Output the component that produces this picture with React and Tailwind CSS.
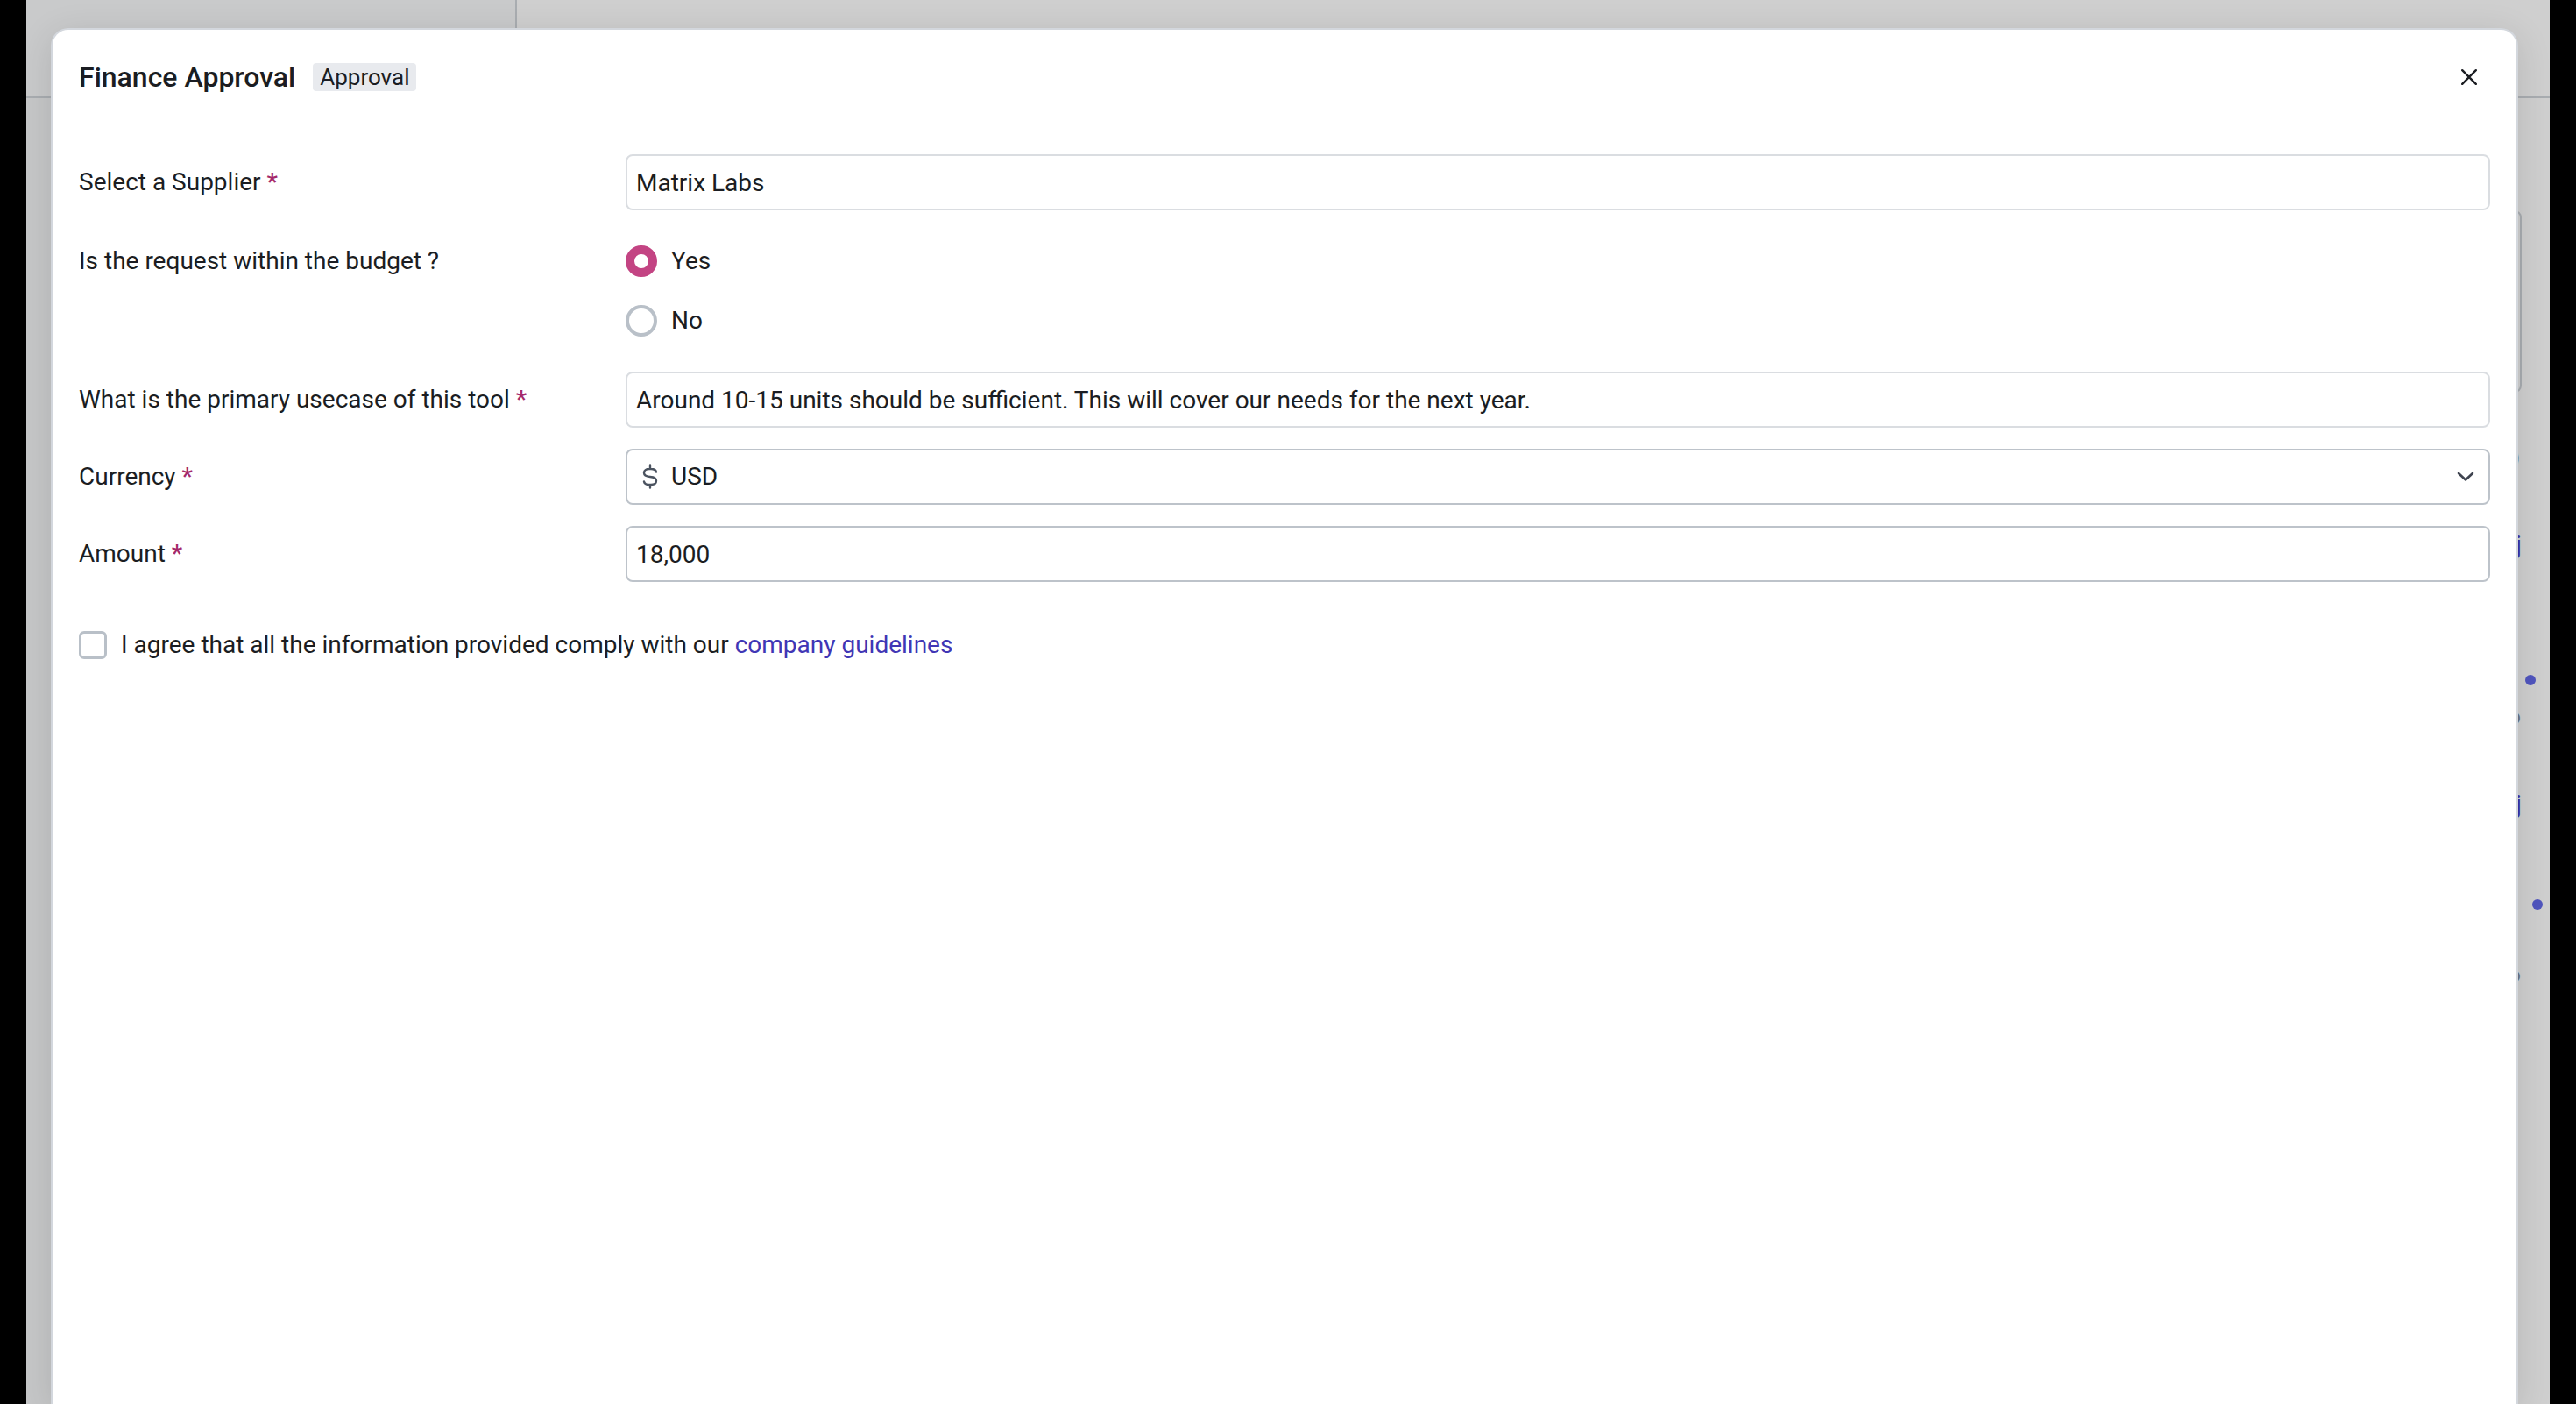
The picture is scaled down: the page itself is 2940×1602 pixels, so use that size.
import { useState } from "react";

const control =
  "h-16 w-full rounded-lg border-2 bg-white px-[10px] outline-none";

function Required() {
  return <span className="ml-[7px] font-medium text-[#a5296a]">*</span>;
}

function Row({ id, label, required, children }) {
  return (
    <div className="flex items-center">
      <label htmlFor={id} className="w-[624px] shrink-0">
        {label}
        {required && <Required />}
      </label>
      <div className="relative min-w-0 flex-1">{children}</div>
    </div>
  );
}

function Radio({ label, checked, onChange }) {
  return (
    <label className="flex h-9 items-center gap-4">
      <input
        type="radio"
        name="budget"
        checked={checked}
        onChange={onChange}
        className="size-9 shrink-0 appearance-none rounded-full border-4 border-[#b9c0c8] bg-white checked:border-10 checked:border-[#c34483]"
      />
      {label}
    </label>
  );
}

function Backdrop() {
  return (
    <div aria-hidden="true" className="flex h-full flex-col bg-[#cfcfcf]">
      <div className="flex h-28 border-b-2 border-[#a9adb1]">
        <div className="w-[560px] border-r-2 border-[#a9adb1] bg-[#c9cacb]" />
      </div>
      <div className="flex flex-1">
        <div className="w-[560px] bg-[#c6c7c8]" />
      </div>
      <div className="absolute top-[240px] right-[32px] h-[208px] w-40 rounded-lg border-2 border-[#a9adb1]" />
      <span className="absolute top-[506px] right-[34px] text-[24px] leading-8 text-[#6b7280]">)</span>
      <span className="absolute top-[606px] right-[32px] text-[28px] leading-8 text-[#3b2fa8]">j</span>
      <span className="absolute top-[770px] right-[16px] size-3 rounded-full bg-[#5055be]" />
      <span className="absolute top-[802px] right-[33px] text-[24px] leading-8 text-[#6b7280]">o</span>
      <span className="absolute top-[902px] right-[32px] text-[28px] leading-8 text-[#3b2fa8]">j</span>
      <span className="absolute top-[1026px] right-[8px] size-3 rounded-full bg-[#5055be]" />
      <span className="absolute top-[1096px] right-[33px] text-[24px] leading-8 text-[#6b7280]">6</span>
    </div>
  );
}

export default function App() {
  const [budget, setBudget] = useState("yes");
  const [useCase, setUseCase] = useState(
    "Around 10-15 units should be sufficient. This will cover our needs for the next year."
  );
  const [supplier, setSupplier] = useState("Matrix Labs");
  const [amount, setAmount] = useState("18,000");

  return (
    <div className="h-screen bg-black px-[30px] font-[Roboto,sans-serif] text-[28px] leading-9 text-[#1b1d22]">
      <div className="relative h-full overflow-hidden">
        <Backdrop />
        <div
          role="dialog"
          aria-labelledby="dialog-title"
          className="absolute top-8 right-9 bottom-0 left-7 rounded-t-[20px] border-2 border-b-0 border-[#d3d7dd] bg-white px-[30px] shadow-[0_8px_40px_rgba(0,0,0,0.12)]"
        >
          <header className="flex items-center pt-[34px]">
            <h1 id="dialog-title" className="text-[32px] leading-10 font-medium">
              Finance Approval
            </h1>
            <span className="ml-5 rounded bg-[#e8eaee] px-2 text-[26px] leading-8">
              Approval
            </span>
            <button type="button" aria-label="Close" className="mr-2 ml-auto p-[7px]">
              <svg viewBox="0 0 18 18" className="size-[18px]" fill="none" stroke="currentColor" strokeWidth="2.4" strokeLinecap="round">
                <path d="M1.2 1.2 16.8 16.8M16.8 1.2 1.2 16.8" />
              </svg>
            </button>
          </header>

          <form className="flex flex-col gap-6 pt-[68px]">
            <Row id="supplier" label="Select a Supplier" required>
              <input
                id="supplier"
                value={supplier}
                onChange={(e) => setSupplier(e.target.value)}
                className={`${control} border-[#dadde1]`}
              />
            </Row>

            <fieldset className="flex items-start py-4">
              <legend className="float-left w-[624px] shrink-0">
                Is the request within the budget ?
              </legend>
              <div className="flex flex-col gap-8">
                <Radio label="Yes" checked={budget === "yes"} onChange={() => setBudget("yes")} />
                <Radio label="No" checked={budget === "no"} onChange={() => setBudget("no")} />
              </div>
            </fieldset>

            <Row id="usecase" label="What is the primary usecase of this tool" required>
              <input
                id="usecase"
                value={useCase}
                onChange={(e) => setUseCase(e.target.value)}
                className={`${control} border-[#dadde1]`}
              />
            </Row>

            <Row id="currency" label="Currency" required>
              <select
                id="currency"
                defaultValue="USD"
                className={`${control} appearance-none border-[#bdc3ca] pl-[50px]`}
              >
                <option>USD</option>
              </select>
              <span className="pointer-events-none absolute inset-y-0 left-[18px] flex items-center text-[#4b5360]">
                <svg viewBox="0 0 20 28" className="h-7 w-5" fill="none" stroke="currentColor" strokeWidth="2.4" strokeLinecap="round" strokeLinejoin="round">
                  <path d="M10 1.5V5M10 23v3.500M17 8.500C16.500 6 14 5 11 5H9C5.500 5 3 6.700 3 9.500S5 13.600 10 14s7 1.700 7 4.500S14.500 23 11 23H9C6 23 3.500 22 3 19.500" />
                </svg>
              </span>
              <span className="pointer-events-none absolute inset-y-0 right-[18px] flex items-center text-[#3f4450]">
                <svg viewBox="0 0 20 12" className="h-3 w-5" fill="none" stroke="currentColor" strokeWidth="2.6" strokeLinecap="round" strokeLinejoin="round">
                  <path d="M2 2l8 7.500L18 2" />
                </svg>
              </span>
            </Row>

            <Row id="amount" label="Amount" required>
              <input
                id="amount"
                value={amount}
                onChange={(e) => setAmount(e.target.value)}
                className={`${control} border-[#bdc3ca]`}
              />
            </Row>

            <div className="flex items-center gap-4 pt-[30px]">
              <input
                id="agree"
                type="checkbox"
                className="size-8 shrink-0 appearance-none rounded-md border-3 border-[#b9c0c8] bg-white checked:bg-[#c34483]"
              />
              <label htmlFor="agree">
                I agree that all the information provided comply with our{" "}
                <a href="#guidelines" className="text-[#4036b5]">
                  company guidelines
                </a>
              </label>
            </div>
          </form>
        </div>
      </div>
    </div>
  );
}
